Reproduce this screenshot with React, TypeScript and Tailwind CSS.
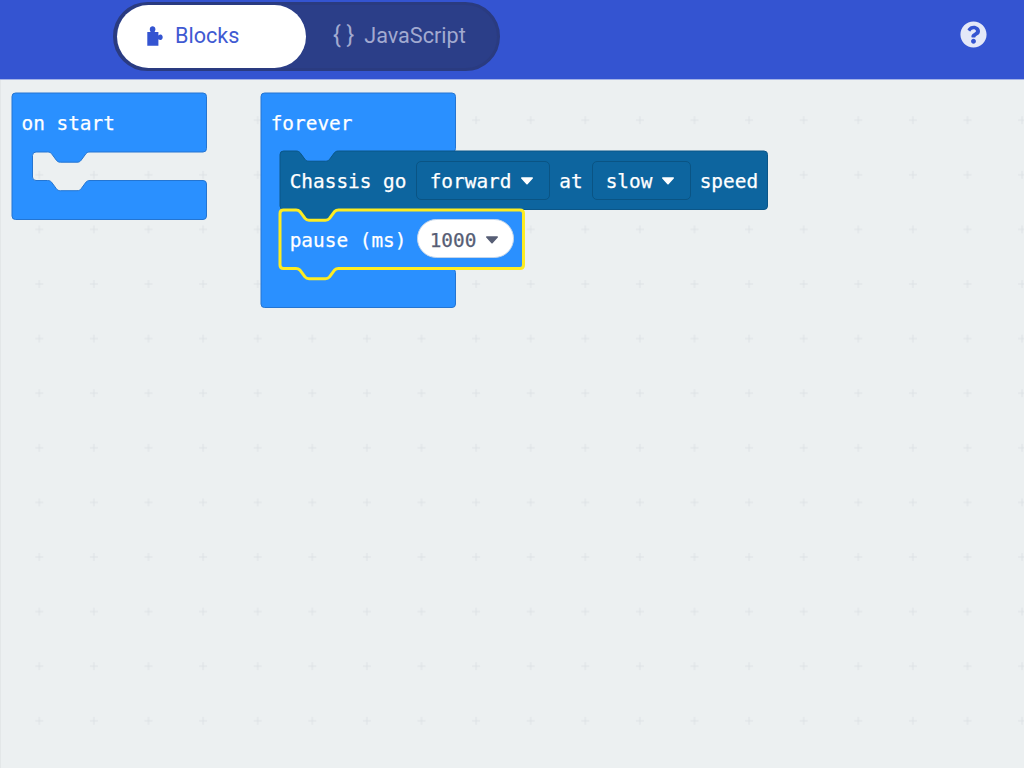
import React from "react";
import { FaQuestionCircle } from "react-icons/fa";

// Smooth connector notch, running left to right or right to left
const notch = (x: number, y: number, dir: 1 | -1) => {
  if (dir === 1) {
    return `L${x - 1} ${y} C${x + 1} ${y} ${x + 2} ${y + 0.6} ${x + 3} ${y + 1.6} L${x + 8} ${y + 8.4} C${x + 9} ${y + 9.6} ${x + 10} ${y + 10.2} ${x + 12} ${y + 10.2} L${x + 28.5} ${y + 10.2} C${x + 30.5} ${y + 10.2} ${x + 31.5} ${y + 9.6} ${x + 32.5} ${y + 8.4} L${x + 37.5} ${y + 1.6} C${x + 38.5} ${y + 0.6} ${x + 39.5} ${y} ${x + 41.5} ${y}`;
  }
  return `L${x + 41.5} ${y} C${x + 39.5} ${y} ${x + 38.5} ${y + 0.6} ${x + 37.5} ${y + 1.6} L${x + 32.5} ${y + 8.4} C${x + 31.5} ${y + 9.6} ${x + 30.5} ${y + 10.2} ${x + 28.5} ${y + 10.2} L${x + 12} ${y + 10.2} C${x + 10} ${y + 10.2} ${x + 9} ${y + 9.6} ${x + 8} ${y + 8.4} L${x + 3} ${y + 1.6} C${x + 2} ${y + 0.6} ${x + 1} ${y} ${x - 1} ${y}`;
};

function cPath(w: number, armH: number, h: number, gapBottom: number) {
  const l = 20.5;
  const r = 3.5;
  return [
    `M${r} 0 H${w - r} Q${w} 0 ${w} ${r} V${armH - r} Q${w} ${armH} ${w - r} ${armH}`,
    notch(l + 16, armH, -1),
    `L${l + r} ${armH} Q${l} ${armH} ${l} ${armH + r} V${gapBottom - r} Q${l} ${gapBottom} ${l + r} ${gapBottom}`,
    notch(l + 16, gapBottom, 1),
    `L${w - r} ${gapBottom} Q${w} ${gapBottom} ${w} ${gapBottom + r} V${h - r} Q${w} ${h} ${w - r} ${h} H${r} Q0 ${h} 0 ${h - r} V${r} Q0 0 ${r} 0 Z`,
  ].join(" ");
}

function stackPath(w: number, h: number) {
  const r = 3.5;
  return [
    `M${r} 0`,
    notch(17, 0, 1),
    `L${w - r} 0 Q${w} 0 ${w} ${r} V${h - r} Q${w} ${h} ${w - r} ${h}`,
    notch(17, h, -1),
    `L${r} ${h} Q0 ${h} 0 ${h - r} V${r} Q0 0 ${r} 0 Z`,
  ].join(" ");
}

function Caret({ color }: { color: string }) {
  return (
    <svg width="14" height="8" viewBox="0 0 14 8" className="mt-[2px] shrink-0">
      <path d="M1.8 1 H12.2 L7 6.6 Z" fill={color} stroke={color} strokeWidth="1.6" strokeLinejoin="round" />
    </svg>
  );
}

function PuzzleIcon() {
  return (
    <svg width="16" height="20" viewBox="0 0 16 20" className="shrink-0">
      <path
        d="M0.3 6 H3.6 C3.2 5 2.7 4.3 2.8 3 C2.9 1.2 4.1 0.3 5.6 0.3 C7.1 0.3 8.3 1.2 8.4 3 C8.5 4.3 8 5 7.6 6 H11.4 V9.4 C12.2 9 12.8 8.5 13.6 8.6 C15 8.7 15.7 10 15.7 11.3 C15.7 12.6 15 13.9 13.6 14 C12.8 14.1 12.2 13.6 11.4 13.2 V19.7 H0.3 Z"
        fill="#3454D1"
      />
    </svg>
  );
}

const BLUE = "#2a90ff";
const BLUE_STROKE = "#2475d2";
const DARK = "#0d659f";
const DARK_STROKE = "#0b5688";

function Dropdown({ label, w }: { label: string; w: string }) {
  return (
    <div className={`flex h-[39.5px] items-center justify-between rounded-[5px] border border-[#0a5484] bg-[#0d659f] pl-[12.5px] pr-[14.5px] ${w}`}>
      <span className="pt-[3px]">{label}</span>
      <Caret color="#ffffff" />
    </div>
  );
}

export default function App() {
  return (
    <div className="flex h-[768px] w-[1024px] flex-col overflow-hidden bg-[#ecf0f1]">
      <header className="flex h-[80px] shrink-0 items-start justify-between border-b border-[#a4b2e6] bg-[#3454d1] pl-[112.5px] pr-[37px] font-['Roboto',sans-serif]">
        <div className="mt-[1.5px] flex h-[69px] w-[387px] items-center rounded-[34.5px] border-[3px] border-[#2a3b80] bg-[#2b3e88] pl-[1.5px]">
          <div className="flex h-[63px] w-[189px] items-center gap-[12px] rounded-[31.5px] bg-white pl-[30px] text-[21.6px] text-[#3f5ad2]">
            <PuzzleIcon />
            <span>Blocks</span>
          </div>
          <div className="ml-[27px] flex items-center gap-[10px] text-[21.6px] text-[#a2aad0]">
            <span className="text-[23px]">{"{ }"}</span>
            <span>JavaScript</span>
          </div>
        </div>
        <div className="mt-[21px] text-[#e4e8f8]">
          <FaQuestionCircle size={27} />
        </div>
      </header>

      <main className="relative flex-1 border-l border-[#e3e7e8] font-['DejaVu_Sans_Mono',monospace] text-[19.4px] text-white [-webkit-text-stroke:0.25px]">
        <svg className="absolute inset-0 h-full w-full">
          <defs>
            <pattern id="grid" x="-16.3" y="-14.4" width="54.6" height="54.6" patternUnits="userSpaceOnUse">
              <path d="M50.6 54.6 H58.6 M54.6 50.6 V58.6 M-4 54.6 H4 M0 50.6 V58.6 M50.6 0 H58.6 M54.6 -4 V4 M-4 0 H4 M0 -4 V4" stroke="#dde2e5" strokeWidth="1" fill="none" />
            </pattern>
          </defs>
          <rect width="100%" height="100%" fill="url(#grid)" />
        </svg>

        {/* on start */}
        <div className="absolute left-[10.5px] top-[12.7px] h-[127px] w-[195px]">
          <svg className="absolute inset-0 overflow-visible" width="195" height="127">
            <path d={cPath(194.5, 59, 126.5, 87.5)} fill={BLUE} stroke={BLUE_STROKE} strokeWidth="1" />
          </svg>
          <div className="relative pl-[10px] pt-[17px] leading-[28px]">on start</div>
        </div>

        {/* forever */}
        <div className="absolute left-[259.7px] top-[12.7px] h-[215px] w-[195px]">
          <svg className="absolute inset-0 overflow-visible" width="195" height="215">
            <path d={cPath(194.5, 59, 214.5, 176)} fill={BLUE} stroke={BLUE_STROKE} strokeWidth="1" />
          </svg>
          <div className="relative pl-[10px] pt-[17px] leading-[28px]">forever</div>
        </div>

        {/* Chassis go */}
        <div className="absolute left-[279.2px] top-[71px] h-[58.5px] w-[488px]">
          <svg className="absolute inset-0 overflow-visible" width="488" height="59">
            <path d={stackPath(487.5, 58.5)} fill={DARK} stroke={DARK_STROKE} strokeWidth="1" />
          </svg>
          <div className="relative flex h-full items-center pl-[9.5px]">
            <span className="w-[126.5px] pt-[3px]">Chassis go</span>
            <Dropdown label="forward" w="w-[133.5px]" />
            <span className="w-[42.5px] pt-[3px] text-center">at</span>
            <Dropdown label="slow" w="w-[98.5px]" />
            <span className="ml-[9px] pt-[3px]">speed</span>
          </div>
        </div>

        {/* pause */}
        <div className="absolute left-[279.2px] top-[129.5px] h-[58.5px] w-[244px]">
          <svg className="absolute inset-0 overflow-visible" width="244" height="59">
            <path d={stackPath(243.5, 58.5)} fill={BLUE} stroke="#fdec22" strokeWidth="3" strokeLinejoin="round" />
          </svg>
          <div className="relative flex h-full items-center pl-[9.5px]">
            <span className="w-[127px] pt-[3px]">pause (ms)</span>
            <div className="flex h-[39px] w-[97.5px] items-center gap-[8.5px] rounded-[19.5px] border border-[#c3d5ea] bg-white pl-[12px] text-[#575e75]">
              <span className="pt-[3px]">1000</span>
              <Caret color="#575e75" />
            </div>
          </div>
        </div>
      </main>
    </div>
  );
}
